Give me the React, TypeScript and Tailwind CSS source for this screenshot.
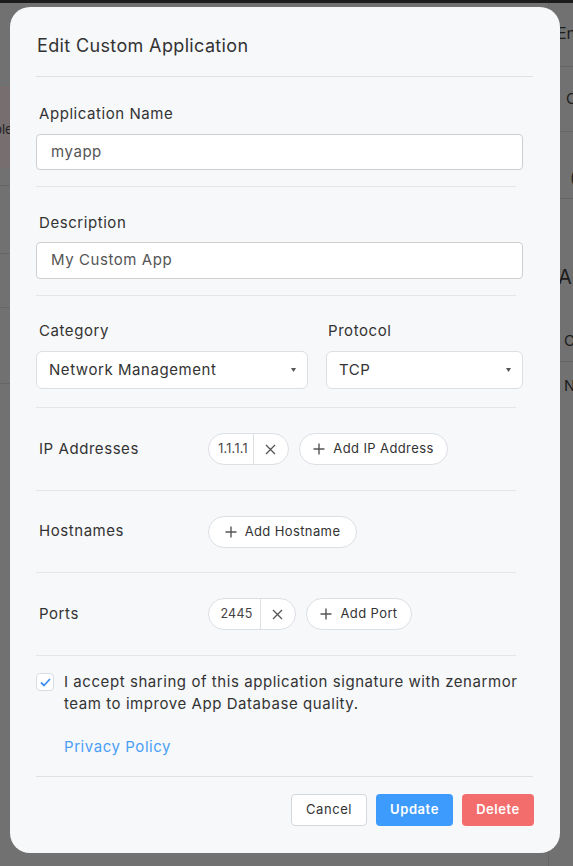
import React from "react";

const font = { fontFamily: "Inter, 'Noto Sans', sans-serif" };

function Divider({ full = false }: { full?: boolean }) {
  return <div className={full ? "h-px w-[497px] bg-[#dfe1e6]" : "h-px w-[480px] bg-[#e3e5e9]"} />;
}

function Plus() {
  return (
    <svg width="12" height="12" viewBox="0 0 12 12" className="shrink-0">
      <path d="M6 0.5V11.5M0.5 6H11.5" stroke="#555" strokeWidth="1.4" />
    </svg>
  );
}

function XIcon() {
  return (
    <svg width="11" height="11" viewBox="0 0 11 11">
      <path d="M1 1L10 10M10 1L1 10" stroke="#555" strokeWidth="1.3" />
    </svg>
  );
}

function Chip({ text, w }: { text: string; w: string }) {
  return (
    <div className="flex h-8 items-stretch rounded-full border border-[#dcdfe4] bg-white">
      <span className={`flex items-center justify-center pl-[4px] text-[12.5px] tracking-[0.02em] text-[#444] ${w}`}>{text}</span>
      <span className="w-px bg-[#dcdfe4]" />
      <span className="flex w-[34px] items-center justify-center pr-[2px]">
        <XIcon />
      </span>
    </div>
  );
}

function AddBtn({ text, w }: { text: string; w: string }) {
  return (
    <div className={`flex h-8 items-center justify-center gap-[8px] rounded-full border border-[#dcdfe4] bg-white text-[13px] tracking-[0.03em] text-[#333] ${w}`}>
      <Plus />
      <span>{text}</span>
    </div>
  );
}

function Caret() {
  return (
    <svg width="5" height="4" viewBox="0 0 5 4">
      <path d="M0 0H5L2.5 4Z" fill="#555" />
    </svg>
  );
}

export default function App() {
  return (
    <div className="relative h-[866px] w-[573px] overflow-hidden bg-[#717171]" style={font}>
      {/* page behind the overlay */}
      <div className="absolute left-0 top-0 h-[3px] w-full bg-[#1c1c1c]" />
      <div className="absolute left-[548px] top-[3px] h-[863px] w-px bg-[#666]" />
      <div className="absolute left-0 top-[87px] h-[80px] w-[10px] overflow-hidden border-y border-[#7d6a6a] bg-[#776f6f]">
        <div className="ml-[-6px] mt-[33px] text-[13px] leading-4 text-[#222]">ble</div>
      </div>
      <div className="absolute left-0 top-[185px] h-px w-[10px] bg-[#666]" />
      <div className="absolute left-0 top-[253px] h-px w-[10px] bg-[#666]" />
      <div className="absolute left-0 top-[307px] h-px w-[10px] bg-[#666]" />
      <div className="absolute left-0 top-[383px] h-px w-[10px] bg-[#666]" />
      <div className="absolute left-[560px] top-[3px] flex h-[500px] w-[13px] flex-col overflow-hidden text-[#1c1c1c]">
        <div className="ml-[-3px] mt-[20px] text-[16px] leading-5">En</div>
        <div className="mt-[23px] h-px w-full bg-[#666]" />
        <div className="ml-[6px] mt-[22px] text-[15px] leading-5">C</div>
        <div className="mt-[22px] h-px w-full bg-[#666]" />
        <div className="ml-[10px] mt-[36px] text-[15px] leading-5">(</div>
        <div className="mt-[10px] h-px w-full bg-[#666]" />
        <div className="ml-[-2px] mt-[66px] text-[20px] leading-6">Al</div>
        <div className="ml-[4px] mt-[42px] text-[15px] leading-5">C</div>
        <div className="mt-[10px] h-px w-full bg-[#666]" />
        <div className="ml-[4px] mt-[14px] text-[15px] leading-5">N</div>
      </div>

      {/* modal */}
      <div className="absolute left-[10px] top-[7px] flex h-[846px] w-[550px] flex-col rounded-[20px] bg-[#f7f8fa] px-[26px] tracking-[0.035em]">
        <div className="pt-[27px] pb-[18px] pl-[1px] text-[18px] leading-6 tracking-[0.02em] text-[#333]">Edit Custom Application</div>
        <Divider full />

        <div className="flex flex-col pt-[26px] pb-[16px]">
          <label className="pl-[3px] text-[15px] leading-[22px] text-[#333]">Application Name</label>
          <div className="mt-[9px] flex h-9 w-[487px] items-center rounded border border-[#cfcfcf] bg-white pl-[14px] text-[15px] text-[#555]">
            myapp
          </div>
        </div>
        <Divider />

        <div className="flex flex-col pt-[25px] pb-[16px]">
          <label className="pl-[3px] text-[15px] leading-[22px] text-[#333]">Description</label>
          <div className="mt-[8px] flex h-[37px] w-[487px] items-center rounded border border-[#cfcfcf] bg-white pl-[14px] text-[15px] text-[#555]">
            My Custom App
          </div>
        </div>
        <Divider />

        <div className="flex gap-[18px] pt-[24px] pb-[18px]">
          <div className="flex w-[272px] flex-col">
            <label className="pl-[3px] text-[15px] leading-[22px] text-[#333]">Category</label>
            <div className="mt-[9px] flex h-[38px] items-center justify-between rounded-md border border-[#dcdfe4] bg-white pl-[12px] pr-[11px] text-[15px] text-[#333]">
              <span>Network Management</span>
              <Caret />
            </div>
          </div>
          <div className="flex w-[197px] flex-col">
            <label className="pl-[2px] text-[15px] leading-[22px] text-[#333]">Protocol</label>
            <div className="mt-[9px] flex h-[38px] items-center justify-between rounded-md border border-[#dcdfe4] bg-white pl-[12px] pr-[11px] text-[15px] text-[#333]">
              <span>TCP</span>
              <Caret />
            </div>
          </div>
        </div>
        <Divider />

        <div className="flex h-[82px] items-center">
          <span className="w-[172px] pl-[3px] text-[15px] text-[#333]">IP Addresses</span>
          <div className="flex gap-[10px]">
            <Chip text="1.1.1.1" w="w-[44px]" />
            <AddBtn text="Add IP Address" w="w-[149px]" />
          </div>
        </div>
        <Divider />

        <div className="flex h-[81px] items-center">
          <span className="w-[172px] pl-[3px] text-[15px] text-[#333]">Hostnames</span>
          <AddBtn text="Add Hostname" w="w-[149px]" />
        </div>
        <Divider />

        <div className="flex h-[82px] items-center">
          <span className="w-[172px] pl-[3px] text-[15px] text-[#333]">Ports</span>
          <div className="flex gap-[10px]">
            <Chip text="2445" w="w-[51px]" />
            <AddBtn text="Add Port" w="w-[106px]" />
          </div>
        </div>
        <Divider />

        <div className="flex gap-[10px] pt-[15px]">
          <div className="mt-[2px] flex h-[18px] w-[18px] shrink-0 items-center justify-center rounded-[4px] border border-[#d9dce1] bg-white">
            <svg width="11" height="9" viewBox="0 0 11 9">
              <path d="M1 4.5L4 7.5L10 1" fill="none" stroke="#3d8ef0" strokeWidth="1.8" />
            </svg>
          </div>
          <div className="flex flex-col">
            <p className="w-[466px] text-[15px] leading-[22px] text-[#333]">
              I accept sharing of this application signature with zenarmor team to improve App Database quality.
            </p>
            <span className="mt-[21px] text-[15px] leading-[22px] text-[#4a9ff5]">Privacy Policy</span>
          </div>
        </div>
        <div className="mt-[18px]">
          <Divider full />
        </div>

        <div className="flex justify-end gap-[9px] pt-[17px]">
          <div className="flex h-8 w-[76px] items-center justify-center rounded border border-[#d4d8de] bg-white text-[13px] text-[#333]">
            Cancel
          </div>
          <div className="flex h-8 w-[77px] items-center justify-center rounded bg-[#3d9bfd] text-[13px] font-semibold text-white">
            Update
          </div>
          <div className="flex h-8 w-[72px] items-center justify-center rounded bg-[#f46d6d] text-[13px] font-semibold text-white">
            Delete
          </div>
        </div>
      </div>
    </div>
  );
}
